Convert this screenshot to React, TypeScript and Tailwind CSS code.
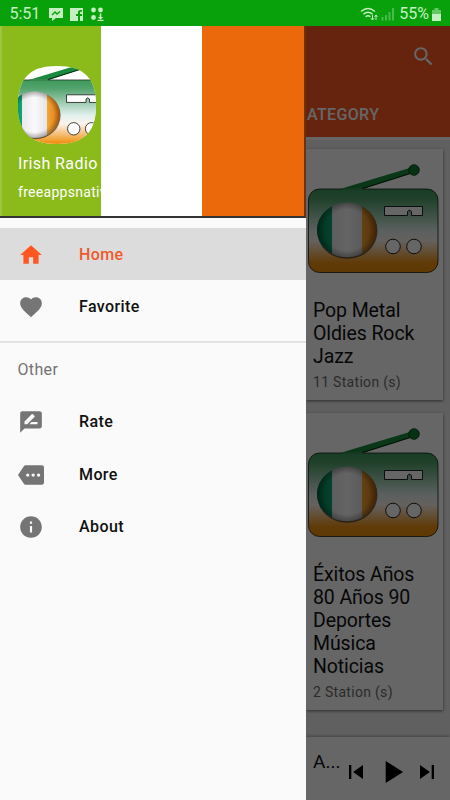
import { useId } from 'react';
import type { IconType } from 'react-icons';
import {
  MdFavorite,
  MdHome,
  MdInfo,
  MdMore,
  MdPlayArrow,
  MdRateReview,
  MdSearch,
  MdSkipNext,
  MdSkipPrevious,
} from 'react-icons/md';

interface MenuItem {
  label: string;
  icon: IconType;
  active?: boolean;
}

const mainItems: MenuItem[] = [
  { label: 'Home', icon: MdHome, active: true },
  { label: 'Favorite', icon: MdFavorite },
];

const otherItems: MenuItem[] = [
  { label: 'Rate', icon: MdRateReview },
  { label: 'More', icon: MdMore },
  { label: 'About', icon: MdInfo },
];

function RadioArt({ className, viewBox }: { className: string; viewBox: string }) {
  const id = useId();
  return (
    <svg className={className} viewBox={viewBox}>
      <defs>
        <linearGradient id={`${id}body`} x1="0" y1="0" x2="0" y2="1">
          <stop offset="0" stopColor="#3f9a5b" />
          <stop offset="0.12" stopColor="#52a36d" />
          <stop offset="0.5" stopColor="#e2f0ee" />
          <stop offset="0.62" stopColor="#fbf3ec" />
          <stop offset="0.88" stopColor="#ef9416" />
          <stop offset="1" stopColor="#ee8d08" />
        </linearGradient>
        <linearGradient id={`${id}flag`} x1="0" y1="0" x2="1" y2="0">
          <stop offset="0" stopColor="#00854f" />
          <stop offset="0.25" stopColor="#0fa573" />
          <stop offset="0.25" stopColor="#e9e9ee" />
          <stop offset="0.5" stopColor="#fafafa" />
          <stop offset="0.75" stopColor="#e4e4e8" />
          <stop offset="0.75" stopColor="#f4a536" />
          <stop offset="1" stopColor="#d97812" />
        </linearGradient>
        <radialGradient id={`${id}shade`}>
          <stop offset="0.75" stopColor="#000" stopOpacity="0" />
          <stop offset="1" stopColor="#000" stopOpacity="0.3" />
        </radialGradient>
      </defs>
      {/* Antenna */}
      <path d="M32 25 105 3l2 5L55 25z" fill="#1b8a3e" />
      <path d="M53 25 107 8" stroke="#032b0e" strokeWidth="1.2" />
      <circle cx="106" cy="6" r="5.3" fill="#0f7d30" stroke="#04280f" strokeWidth="0.8" />
      {/* Case */}
      <rect x="0.5" y="25" width="129.5" height="83.5" rx="11" fill={`url(#${id}body)`} stroke="#111" strokeOpacity="0.75" />
      <path d="M34 25h21" stroke="#3f9a5b" strokeWidth="1.5" />
      <ellipse cx="39.3" cy="67" rx="30.2" ry="27.8" fill="#222" opacity="0.65" />
      <ellipse cx="39" cy="66" rx="30" ry="27.3" fill={`url(#${id}flag)`} />
      <ellipse cx="39" cy="66" rx="30" ry="27.3" fill={`url(#${id}shade)`} />
      <path d="M76.5 42.5h38v9h-11v-4q-2-3-4 0v4h-23z" fill="#fff" stroke="#222" />
      <circle cx="85" cy="82.5" r="7.3" fill="#fff" stroke="#222" />
      <circle cx="106" cy="82.5" r="7.3" fill="#fff" stroke="#222" />
    </svg>
  );
}

function StatusBar() {
  return (
    <div className="flex h-[26px] items-center bg-[#08a00b] pt-[2px] pl-[9.5px] pr-[9px] text-[16px] text-[#c4efc0]">
      <span className="w-[39.5px]">5:51</span>
      <svg className="h-[14px] w-[56px]" viewBox="0 0 56 14" fill="#c4efc0">
        <path d="M0 1h14v10H7l-4 3v-3H0z" />
        <path d="m3 8 3-3 2 2 3-2.5" fill="none" stroke="#08a00b" strokeWidth="1.4" />
        <path d="M21 1h13v13h-3V9h2V7h-2V5.500q0-1 2-1V3q-4-.5-4 2v2h-2v2h2v5h-8z" />
        <circle cx="44.500" cy="3" r="2.400" />
        <circle cx="51.500" cy="3" r="2.400" />
        <circle cx="44.500" cy="10.500" r="2.400" />
        <path d="M50.700 6.500h1.600v3.500h2L51.500 12.500 48.700 10h2zM48.500 12.800h6V14h-6z" />
      </svg>
      <svg className="ml-auto h-[14px] w-[34px]" viewBox="0 0 34 14" fill="none" stroke="#c4efc0" strokeWidth="1.400">
        <path d="M1 4.500q7-6 14 0M3.300 7.200q4.700-4 9.400 0M5.600 9.700q2.400-2 4.800 0" />
        <path d="M12.500 8v5m-1.500-1.800 1.500 1.800 1.500-1.800M16 13V8m-1.500 1.800L16 8l1.500 1.800" strokeWidth="1" />
        <path d="M22.500 10v3.500M26 8v5.500M29.500 5v8.500M33 1v12.500" strokeWidth="2" opacity="0.35" />
      </svg>
      <span className="ml-[5px]">55%</span>
      <svg className="ml-[3px] h-[13px] w-[9px]" viewBox="0 0 9 13" fill="#c4efc0">
        <path d="M2.500 0h4v2H9v4.500H0V2h2.500z" opacity="0.5" />
        <path d="M0 6h9v7H0z" />
      </svg>
    </div>
  );
}

function MenuRow({ item }: { item: MenuItem }) {
  const Icon = item.icon;
  return (
    <div
      className={
        item.active
          ? 'flex h-[52.5px] items-center bg-[#dcdcdc] pt-[2px] pl-[17.5px] text-[#ff5722]'
          : 'flex h-[52.5px] items-center pt-px pl-[17.5px] text-[#757575]'
      }
    >
      <Icon className="size-[26px]" />
      <span
        className={
          item.active
            ? 'ml-[35.5px] text-[16px] font-medium tracking-[0.4px] text-[#f0592b]'
            : 'ml-[35.5px] text-[16px] font-medium tracking-[0.4px] text-[#111111]'
        }
      >
        {item.label}
      </span>
    </div>
  );
}

function Drawer() {
  return (
    <div className="w-[306px] shrink-0 bg-[#fafafa]">
      <div className="flex h-[192px] flex-col border-r-2 border-b-2 border-r-[#6d3205] border-b-[#333] bg-[linear-gradient(to_right,#a5ca4e_0,#8bba1b_3px,#8bba1b_101px,#fff_101px,#fff_202px,#eb690a_202px)] pt-[40px] pl-[18px] text-white">
        <div className="h-[78px] w-[78px] overflow-hidden bg-white [clip-path:path('M39_0C66_0_78_12_78_39C78_66_66_78_39_78C12_78_0_66_0_39C0_12_12_0_39_0Z')]">
          <RadioArt className="size-[78px]" viewBox="19.4 8.6 91.8 91.8" />
        </div>
        <div className="mt-[10px] text-[16px] leading-[20px] tracking-[0.4px]">Irish Radio</div>
        <div className="mt-[10px] whitespace-nowrap text-[14px] leading-[17px] tracking-[0.3px]">freeappsnative</div>
      </div>
      <div className="pt-[9.5px]">
        {mainItems.map((item) => (
          <MenuRow key={item.label} item={item} />
        ))}
      </div>
      <div className="mt-[8.5px] border-t-2 border-[#e2e2e2] pt-[17px] pl-[17.5px] text-[16px] leading-[20px] tracking-[0.35px] text-[#737373]">
        Other
      </div>
      <div className="mt-[15.500px]">
        {otherItems.map((item) => (
          <MenuRow key={item.label} item={item} />
        ))}
      </div>
    </div>
  );
}

function CategoryCard({ title, stations, className }: { title: string; stations: string; className: string }) {
  return (
    <div className={`mr-[7px] bg-white shadow-[0_1px_3px_rgba(0,0,0,0.55)] ${className}`}>
      <RadioArt className="ml-[1.500px] h-[109px] w-[131px]" viewBox="0 0 131 109" />
      <div className="mt-[26px] ml-[7px] w-[115px] text-[19.5px] leading-[23px] tracking-[-0.1px] text-[#111]">{title}</div>
      <div className="mt-[6px] ml-[7px] text-[14px] leading-[17px] tracking-[0.3px] text-[#6d6d6d]">{stations}</div>
    </div>
  );
}

function CategoryPage() {
  return (
    <div className="relative flex min-w-0 flex-1 flex-col overflow-hidden bg-[#f1f1f1]">
      <div className="flex h-[111px] flex-col bg-[#ff5722] text-white">
        <div className="flex h-[61px] items-center justify-end pr-[14px]">
          <MdSearch className="size-[25px]" />
        </div>
        <div className="flex flex-1 items-center pl-[1px] text-[16px] leading-[20px] font-medium tracking-[0.35px]">
          <span className="pt-[5px]">ATEGORY</span>
        </div>
      </div>
      <div className="h-[3px] bg-white" />
      <CategoryCard className="mt-[9px] h-[251px] pt-[15px]" title="Pop Metal Oldies Rock Jazz" stations="11 Station (s)" />
      <CategoryCard className="mt-[13px] h-[297px] pt-[15px]" title="Éxitos Años 80 Años 90 Deportes Música Noticias" stations="2 Station (s)" />
      <div className="mt-auto flex h-[63px] items-center bg-white pl-[7px] text-[#111] shadow-[0_-1px_3px_rgba(0,0,0,0.3)]">
        <span className="w-[29px] pb-[13px] text-[19px] leading-[20px] whitespace-nowrap">A...</span>
        <MdSkipPrevious className="mt-[6px] size-[28px] text-black" />
        <MdPlayArrow className="mt-[6px] ml-[3px] size-[38px] text-black" />
        <MdSkipNext className="mt-[6px] ml-[2px] size-[28px] text-black" />
      </div>
      {/* Scrim behind the open drawer */}
      <div className="absolute inset-0 bg-black/60" />
    </div>
  );
}

export default function App() {
  return (
    <div className="flex h-[800px] w-[450px] flex-col overflow-hidden font-[Roboto,sans-serif]">
      <StatusBar />
      <div className="flex min-h-0 flex-1">
        <Drawer />
        <CategoryPage />
      </div>
    </div>
  );
}
